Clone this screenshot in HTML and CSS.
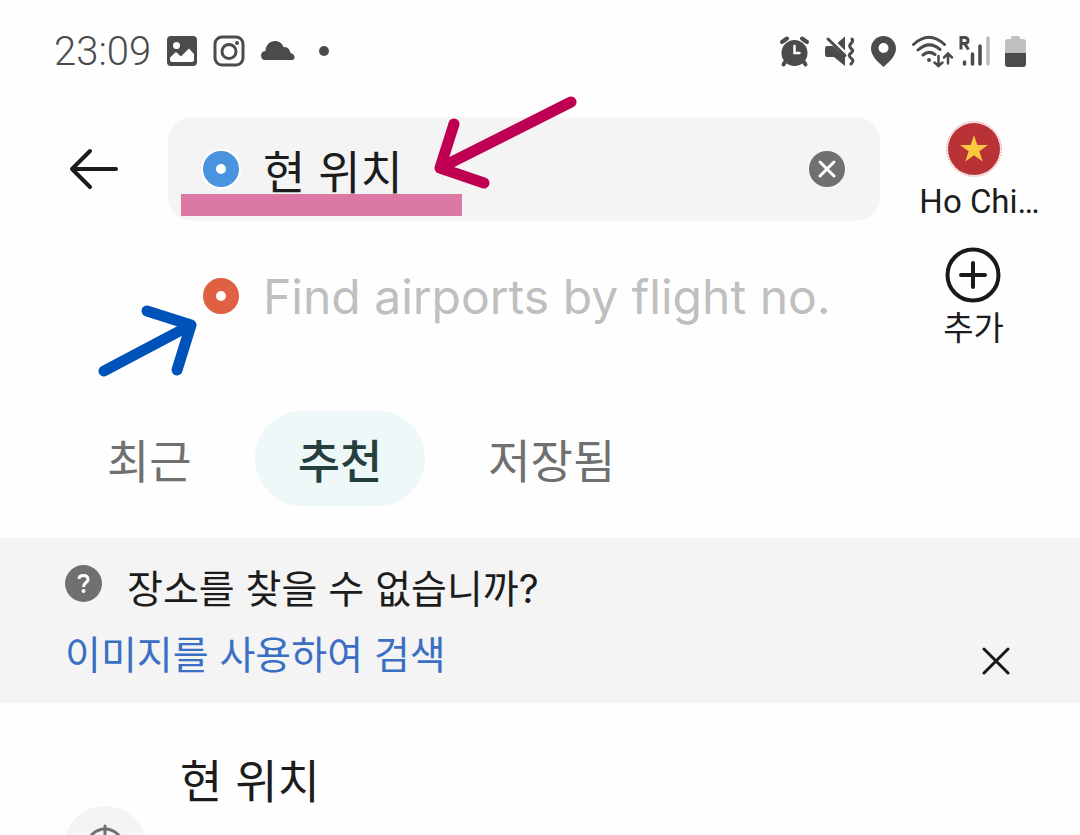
FILE: index.html
```html
<!DOCTYPE html>
<html lang="ko">
<head>
<meta charset="utf-8">
<meta name="viewport" content="width=device-width, initial-scale=1">
<title>현 위치</title>
<link rel="stylesheet" href="styles.css">
</head>
<body>
<div class="app">
  <div class="status">
    <div class="status-left">
      <time class="clock">23:09</time>
      <svg width="30" height="30" viewBox="0 0 30 30"><path fill="#4b4b4b" fill-rule="evenodd" d="M4 0H26Q30 0 30 4V26Q30 30 26 30H4Q0 30 0 26V4Q0 0 4 0ZM9.500 6A3.500 3.500 0 1 0 9.500 13A3.500 3.500 0 1 0 9.500 6ZM3 24V21.500L9 16L14 20.500L22 12.500L27 18V24Q27 26 25 26H5Q3 26 3 24Z"/></svg>
      <svg width="32" height="32" viewBox="0 0 32 32" fill="none" stroke="#4b4b4b" stroke-width="3"><rect x="2" y="2" width="28" height="28" rx="7"/><circle cx="16" cy="16.500" r="7"/><circle cx="24" cy="8" r="2" fill="#4b4b4b" stroke="none"/></svg>
      <svg width="34" height="20" viewBox="0 0 34 20"><path fill="#4b4b4b" d="M4 19C1.500 19 0 17 0 14.500C0 12 2 10 4.500 10C4.500 4 9 0 14 0C18.500 0 21 2.500 22.500 6C26.500 5.500 29 8.500 29.500 12C32 12.500 34 14.500 33.500 17Q33 19 31 19Z"/></svg>
      <span class="status-dot"></span>
    </div>
    <svg class="status-right" width="250" height="36" viewBox="778 32 250 36" fill="none" stroke="#4b4b4b" stroke-width="3" stroke-linecap="round">
      <circle cx="794.500" cy="52" r="13" fill="#4b4b4b" stroke="none"/>
      <path stroke-width="4" d="M782 41L787 37.500M807 41L802 37.500M785 61L783.500 63.500M804 61L805.500 63.500"/>
      <path stroke="#fff" d="M794.500 45V52H799.500" stroke-width="2.500"/>
      <path fill="#4b4b4b" stroke="none" d="M827 45H833L845 56V65L834 56H827Q825 56 825 53V48Q825 45 827 45ZM837.500 42L845 35.500V49.500Z"/>
      <path d="M828 38L845 54.500M852 38C855 42 848 42 850 46S854 48 852 51S848 53 850 56S855 58 851 63"/>
      <path fill="#4b4b4b" stroke="none" fill-rule="evenodd" d="M883.500 35A12.500 12.500 0 0 0 871 47.500C871 55 878 61 883.500 66C889 61 896 55 896 47.500A12.500 12.500 0 0 0 883.500 35ZM883.500 42A5 5 0 1 1 883.500 52A5 5 0 1 1 883.500 42Z"/>
      <path d="M913.500 43.500Q929 29 944.500 43.500M918 49Q929 39 940 48.500M923 54Q929 49 935 53.500"/>
      <circle cx="929" cy="59" r="2" fill="#4b4b4b" stroke="none"/>
      <path stroke-width="2.500" d="M938.500 55V65M934.500 61.500L938.500 65L942.500 61.500M948 62.500V53M944 56.500L948 52.500L952 56.500"/>
      <path stroke-linecap="butt" d="M961 48.500V36.500H964.500Q968 36.500 968 39.500T964.500 42.500H961M964.500 42.500L968.500 48.500"/>
      <path stroke-width="3.500" d="M964.500 61V63M972.500 53V63M980 45V63"/><path stroke="#bdbdbd" stroke-width="3.500" d="M988 37V63"/>
      <path fill="#bfbfbf" stroke="none" d="M1011 37Q1011 35 1013 35H1018Q1020 35 1020 37V38H1023Q1026 38 1026 41V52H1005V41Q1005 38 1008 38H1011Z"/>
      <path fill="#4b4b4b" stroke="none" d="M1005 52H1026V63Q1026 66 1023 66H1008Q1005 66 1005 63Z"/>
    </svg>
  </div>

  <header class="search">
    <button class="back" aria-label="뒤로"><svg width="50" height="42" viewBox="0 0 50 42" fill="none" stroke="#1c1c1c" stroke-width="4" stroke-linecap="round" stroke-linejoin="round"><path d="M21 3L3 21L21 39M3 21H47"/></svg></button>
    <div class="fields">
      <div class="field field-active">
        <span class="pin pin-start"></span>
        <input class="input input-filled" type="text" aria-label="출발지" value="현 위치">
        <button class="clear" aria-label="지우기"><svg width="36" height="36" viewBox="0 0 36 36"><circle cx="18" cy="18" r="18" fill="#707070"/><path d="M11 11L25 25M25 11L11 25" stroke="#fff" stroke-width="3" stroke-linecap="round"/></svg></button>
      </div>
      <div class="field">
        <span class="pin pin-end"></span>
        <input class="input" type="text" aria-label="도착지" placeholder="Find airports by flight no.">
      </div>
    </div>
    <div class="side">
      <button class="side-item"><svg width="58" height="58" viewBox="0 0 58 58"><circle cx="29" cy="29" r="27.500" fill="#fbe3e5" stroke="#c98389" stroke-width="1" stroke-dasharray="1 2"/><circle cx="29" cy="29" r="26" fill="#b93236"/><path fill="#fbc93f" d="M29 15L32.300 25H43L34.400 31.200L37.600 41.500L29 35.200L20.400 41.500L23.600 31.200L15 25H25.700Z"/></svg><span class="city">Ho Chi…</span></button>
      <button class="side-item"><svg width="58" height="58" viewBox="0 0 58 58" fill="none" stroke="#17191b" stroke-width="4" stroke-linecap="round"><circle cx="29" cy="29" r="25.500"/><path d="M29 17V41M17 29H41"/></svg><span>추가</span></button>
    </div>
    <div class="marker"></div>
    <svg class="notes" width="520" height="300" viewBox="80 90 520 300" fill="none" stroke-width="11" stroke-linecap="round" stroke-linejoin="round" aria-hidden="true">
      <path stroke="#bf0052" d="M571 102L440 168M454 124L440 168L484 183"/>
      <path stroke="#0052bb" d="M104 371L191 325M147 311L191 325L177 370"/>
    </svg>
  </header>

  <nav class="tabs">
    <button class="tab">최근</button>
    <button class="tab tab-on">추천</button>
    <button class="tab">저장됨</button>
  </nav>

  <section class="notice">
    <div class="notice-text">
      <p class="question"><svg width="37" height="37" viewBox="0 0 37 37"><circle cx="18.500" cy="18.500" r="18.500" fill="#707070"/><path d="M14 14Q14 10.500 18.500 10.500T23 14.500C23 17.500 18.500 17.500 18.500 22" fill="none" stroke="#fff" stroke-width="3"/><circle cx="18.500" cy="26" r="2" fill="#fff"/></svg><span>장소를 찾을 수 없습니까?</span></p>
      <a class="link" href="#image">이미지를 사용하여 검색</a>
    </div>
    <button class="close" aria-label="닫기"><svg width="28" height="28" viewBox="0 0 28 28" stroke="#17191b" stroke-width="3" stroke-linecap="round"><path d="M2 2L26 26M26 2L2 26"/></svg></button>
  </section>

  <main class="place">
    <svg class="place-icon" width="82" height="82" viewBox="0 0 82 82" fill="none" stroke="#707070" stroke-width="3" stroke-linecap="round"><circle cx="41" cy="41" r="41" fill="#f4f4f4" stroke="none"/><circle cx="41" cy="41" r="18"/><path d="M41 20V31M41 51V62M20 41H31M51 41H62"/></svg>
    <h1 class="place-name">현 위치</h1>
  </main>
</div>
</body>
</html>
```
FILE: styles.css
```css
* { box-sizing: border-box; }
body {
  margin: 0;
  background: #fefefe;
  color: #1c1c1c;
  font-family: Inter, "Noto Sans CJK KR", sans-serif;
}
button { border: 0; padding: 0; background: none; color: inherit; font: inherit; }
svg { display: block; flex: none; }
.app { height: 100vh; overflow: hidden; }

.status {
  display: flex;
  justify-content: space-between;
  align-items: center;
  height: 102px;
  padding: 0 52px 0 54px;
  color: #4b4b4b;
}
.status-left { display: flex; align-items: center; gap: 16px; }
.clock { font-family: Roboto, sans-serif; font-size: 40px; font-weight: 300; }
.status-dot { width: 10px; height: 10px; margin-left: 8px; border-radius: 50%; background: #4b4b4b; }

.search {
  position: relative;
  display: grid;
  grid-template-columns: 168px minmax(0, 1fr) 200px;
  padding-top: 15px;
}
.back { display: flex; align-items: center; height: 104px; padding-left: 69px; }
.fields { display: flex; flex-direction: column; gap: 23px; }
.field { display: flex; align-items: center; height: 104px; padding: 0 35px; border-radius: 24px; }
.field-active { background: #f4f4f4; }
.pin { flex: none; width: 36px; height: 36px; border-radius: 50%; background: #fff; }
.pin-start { border: 13px solid #4993df; box-shadow: 0 0 0 2px #fff; }
.pin-end { border: 13px solid #e06044; }
.input {
  flex: 1;
  min-width: 0;
  margin-left: 24px;
  padding: 2px 0 0;
  border: 0;
  outline: 0;
  background: none;
  color: #1c1c1c;
  font: 400 48px/64px Inter, "Noto Sans CJK KR", sans-serif;
}
.input-filled { padding-top: 6px; font-size: 46px; }
.input::placeholder { color: #bfbfbf; opacity: 1; }
.clear { flex: none; }
.side { display: flex; flex-direction: column; align-items: center; gap: 20px; padding: 3px 13px 0 0; }
.side-item { display: flex; flex-direction: column; align-items: center; font-size: 33px; line-height: 48px; }
.city { padding-left: 12px; font-family: Roboto, sans-serif; }
.marker { position: absolute; left: 181px; top: 92px; width: 281px; height: 22px; background: #db78a4; }
.notes { position: absolute; left: 80px; top: -12px; }

.tabs { display: flex; gap: 20px; padding: 59px 64px 32px; }
.tab {
  height: 95px;
  padding: 4px 43px 0;
  border-radius: 48px;
  color: #707070;
  font-size: 46px;
  line-height: 64px;
}
.tab-on { background: #eef8f9; color: #25403f; font-weight: 500; }

.notice {
  display: flex;
  justify-content: space-between;
  align-items: flex-end;
  padding: 17px 70px 16px 65px;
  background: #f4f4f4;
}
.question { display: flex; gap: 25px; margin: 0; font-size: 39px; line-height: 68px; }
.question svg { margin-top: 10px; }
.link { display: block; color: #3b6fc3; font-size: 39px; line-height: 64px; text-decoration: none; }
.close { margin-bottom: 12px; }

.place { display: flex; gap: 34px; padding: 46px 64px; }
.place-icon { margin-top: 57px; }
.place-name { margin: 0; font-size: 46px; font-weight: 400; line-height: 64px; }
```
